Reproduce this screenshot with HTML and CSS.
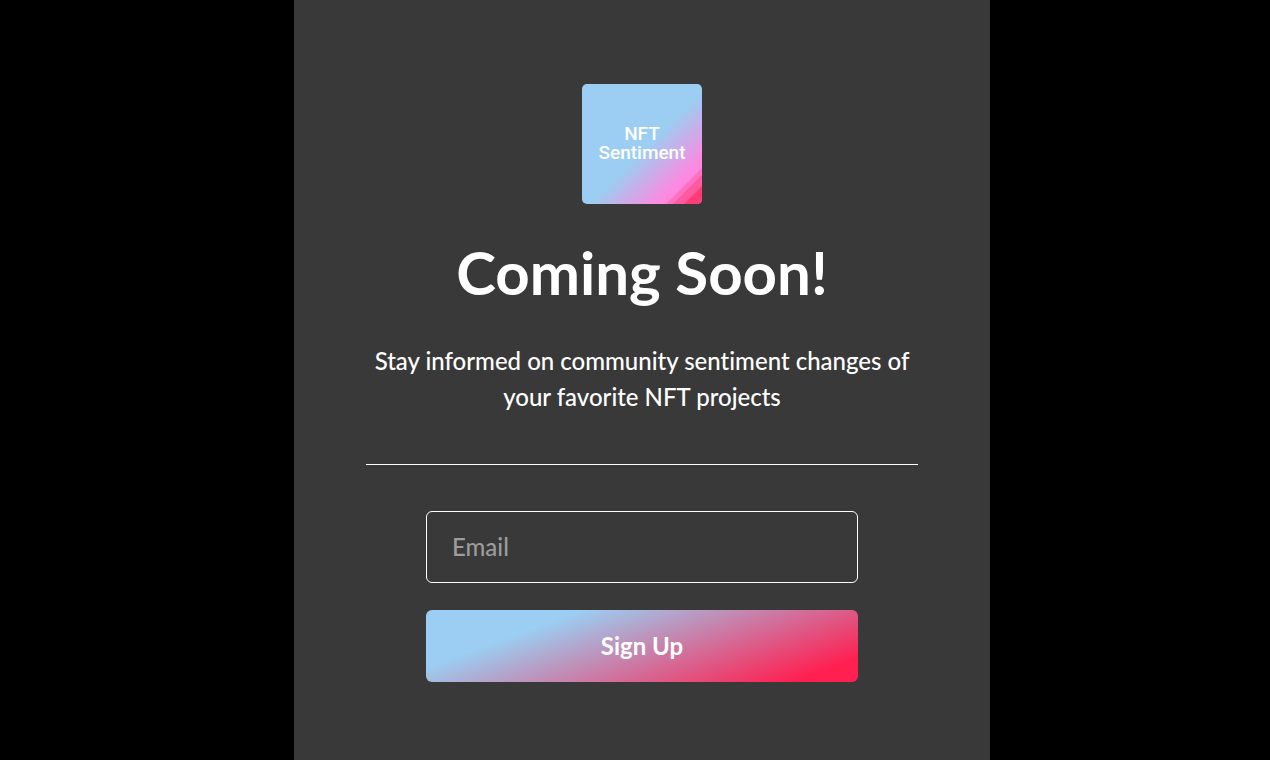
FILE: index.html
```html
<!DOCTYPE html>
<html lang="en">
<head>
<meta charset="utf-8">
<meta name="viewport" content="width=device-width, initial-scale=1">
<title>NFT Sentiment</title>
<link rel="stylesheet" href="styles.css">
</head>
<body>
<main class="panel">
  <svg class="logo" viewBox="0 0 120 120" role="img" aria-label="NFT Sentiment">
    <defs>
      <linearGradient id="sky" gradientUnits="userSpaceOnUse" x1="0" y1="0" x2="120" y2="120">
        <stop offset="0.53" stop-color="#9bcef2"/>
        <stop offset="0.82" stop-color="#ff88e0"/>
      </linearGradient>
    </defs>
    <rect width="120" height="120" fill="url(#sky)"/>
    <path d="M120 84L84 120H120Z" fill="#ff70c0"/>
    <path d="M120 91L91 120H120Z" fill="#ff5a9f"/>
    <path d="M120 102L102 120H120Z" fill="#ff3b78"/>
    <g class="logo-text">
      <text x="60" y="56">NFT</text>
      <text x="60" y="75">Sentiment</text>
    </g>
  </svg>
  <h1 class="title">Coming Soon!</h1>
  <p class="lead">Stay informed on community sentiment changes of your favorite NFT projects</p>
  <hr class="divider">
  <form class="signup">
    <input class="field" type="email" name="email" placeholder="Email" aria-label="Email">
    <button class="submit" type="submit">Sign Up</button>
  </form>
</main>
</body>
</html>
```
FILE: styles.css
```css
* {
  box-sizing: border-box;
}

body {
  margin: 0;
  padding-left: 14px;
  min-height: 100vh;
  display: flex;
  justify-content: center;
  background: #000;
  color: #fff;
  font-family: Lato, "Liberation Sans", sans-serif;
  font-size: 24px;
  font-variant-ligatures: none;
  line-height: 36px;
}

.panel {
  width: 100%;
  max-width: 696px;
  padding: 84px 72px 72px;
  display: flex;
  flex-direction: column;
  align-items: center;
  background: #393939;
  text-align: center;
}

.logo {
  width: 120px;
  height: 120px;
  border-radius: 5px;
}

.logo-text {
  fill: #fff;
  font-family: Roboto, sans-serif;
  font-size: 19px;
  font-weight: 500;
  text-anchor: middle;
}

.title {
  margin: 34px 0 37px;
  font-size: 60px;
  font-weight: 700;
  line-height: 68px;
}

.lead {
  margin: 0;
  font-weight: 500;
}

.divider {
  width: 100%;
  margin: 49px 0 46px;
  border: 0;
  border-top: 1px solid #fff;
}

.signup {
  width: 100%;
  max-width: 432px;
  display: grid;
  gap: 27px;
}

.field,
.submit {
  width: 100%;
  height: 72px;
  border-radius: 6px;
  color: #fff;
  font: inherit;
}

.field {
  padding: 0 25px 2px;
  border: 1px solid #fff;
  background: transparent;
  font-weight: 500;
}

.field::placeholder {
  color: #9c9c9c;
}

.submit {
  border: 0;
  background: linear-gradient(160deg, #9bcef2 25%, #ff1f50 90%);
  font-weight: 700;
  cursor: pointer;
}
```
